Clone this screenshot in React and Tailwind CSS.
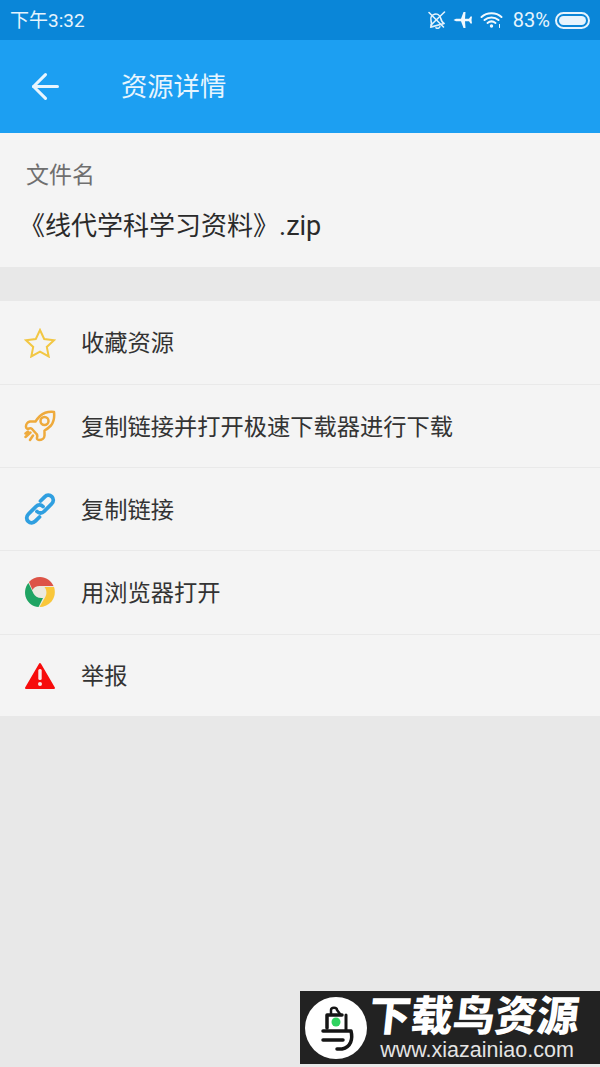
import React from "react";
import { ArrowLeft } from "lucide-react";

const FONT = "font-['Roboto','Noto_Sans_CJK_SC',sans-serif]";

const StarIcon = () => (
  <svg width="32" height="30" viewBox="0 0 32 30" fill="none" stroke="#f2c744" strokeWidth="2" strokeLinejoin="miter">
    <path d="M16 2 L20.200 11 L30 12.200 L22.800 18.900 L24.700 28.500 L16 23.700 L7.300 28.500 L9.200 18.900 L2 12.200 L11.800 11 Z" />
  </svg>
);

const RocketIcon = () => (
  <svg width="32" height="32" viewBox="0 0 32 32" fill="none" stroke="#eeaa3c" strokeWidth="2.500" strokeLinejoin="round" strokeLinecap="round">
    <path d="M30 2 C25 1.500 20 2.500 16 6 C14 8 12.500 10 11.500 11.500 L6 11.500 C3.500 12 1.800 14.500 2 17 C2 18.500 3.500 19 5 18.500 C6.500 18 7.500 18 8 19 L12.500 24 C13.500 25 13.500 26 13 27.500 C12.700 29 13.500 30 15 30 C18 30 20.500 28 20.500 25.500 L20.500 20.500 C22.500 19.500 25 17.500 27 15.500 C30 11.500 30.500 6 30 2 Z" />
    <circle cx="20.500" cy="11" r="4" />
    <path d="M6.500 22.500 L1.500 27 M9 25.500 L6 30 M4 21.500 L1.500 23.500" />
  </svg>
);

const LinkIcon = () => (
  <svg width="32" height="32" viewBox="0 0 32 32" fill="none" stroke="#2f9fe0" strokeWidth="3.800" strokeLinecap="round">
    <path d="M13 18.500 C15 20.500 18 20.500 20 18.500 L27.500 11 C29.800 8.700 29.800 5.700 27.800 3.700 C25.800 1.700 22.700 1.800 20.700 3.800 L16.500 8" />
    <path d="M19 13.500 C17 11.500 14 11.500 12 13.500 L4.500 21 C2.200 23.300 2.200 26.300 4.200 28.300 C6.200 30.300 9.300 30.200 11.300 28.200 L15.500 24" />
  </svg>
);

const ChromeIcon = () => (
  <svg width="32" height="32" viewBox="0 0 32 32">
    <circle cx="16" cy="16" r="15" fill="#ece9df" />
    <path d="M5 6 C8 2.500 12 1 16 1 C22 1 27 4.500 29.500 10 L17 10 C13 9.500 10 11 8.500 14 Z" fill="#dd5347" />
    <path d="M30 11 C31.500 16 31 21 27.500 25.500 C24.500 29 20 31 15.500 31 L21 21.500 C23 18.500 23 14 20.500 11 Z" fill="#f9c73a" />
    <path d="M14.500 31 C9 30.500 4.500 27.500 2.300 22.500 C0 17 1 11 4.500 7 L9.500 17.500 C11 20.500 14 22.500 19 22 Z" fill="#1fa463" />
  </svg>
);

const WarnIcon = () => (
  <svg width="32" height="28" viewBox="0 0 32 28">
    <path d="M16 2 L30 26 L2 26 Z" fill="#f70c0c" stroke="#f70c0c" strokeWidth="2" strokeLinejoin="round" />
    <rect x="14.300" y="7" width="3.400" height="11" rx="1.500" fill="#f8e8e8" />
    <circle cx="16" cy="22" r="2" fill="#f8e8e8" />
  </svg>
);

const BellOffIcon = () => (
  <svg width="20" height="20" viewBox="0 0 20 20" fill="none" stroke="#e3f2fc" strokeWidth="1.600" strokeLinecap="round" strokeLinejoin="round">
    <g transform="rotate(-15 10 10)">
      <path d="M3 15.500 C5 14 5 11.500 5 9.500 C5 6 7.500 4 10 4 C12.500 4 15 6 15 9.500 C15 11.500 15 14 17 15.500 Z" />
      <path d="M8 17.500 C9 18.800 11 18.800 12 17.500" />
    </g>
    <path d="M3 2.500 L17.500 17" />
    <path d="M18.500 2 L5 15" />
  </svg>
);

const PlaneIcon = () => (
  <svg width="20" height="18" viewBox="0 0 20 18" fill="#f2f9fe">
    <path d="M0.500 9 L3 7.800 L8 7.800 L10.500 1 L12.500 1 L12 7.800 L16 7.800 L17.500 5.500 L19 5.500 L18.500 9 L19 12.500 L17.500 12.500 L16 10.200 L12 10.200 L12.500 17 L10.500 17 L8 10.200 L3 10.200 Z" />
  </svg>
);

const WifiIcon = () => (
  <svg width="24" height="18" viewBox="0 0 24 18" fill="none" stroke="#f2f9fe" strokeWidth="2" strokeLinecap="round">
    <path d="M1.500 6 C7 1 16 1 21.500 6" />
    <path d="M4.500 9 C8.500 5.500 14.500 5.500 18.500 9" />
    <path d="M7.500 12 C10 10 13 10 15.500 12" />
    <circle cx="11.500" cy="15" r="1.700" fill="#f2f9fe" stroke="none" />
    <path d="M19.500 13.500 L19.500 16.500" strokeWidth="1" />
  </svg>
);

const BirdLogo = () => (
  <svg width="62" height="62" viewBox="0 0 62 62" fill="none" stroke="#151515" strokeLinecap="round" strokeLinejoin="round">
    <path d="M26 17 L26 13 C26 10 32 10 32 13 L35 17" strokeWidth="2.500" />
    <path d="M37 18 L22 18 L22 31" strokeWidth="3.500" />
    <path d="M41 18 L41 33" strokeWidth="3" />
    <path d="M18 34 L46 34 C48 42 46 50 37 52 L32 52" strokeWidth="3.500" />
    <path d="M18 43 L38 43" strokeWidth="3.500" />
    <circle cx="31" cy="25" r="4.500" fill="#2fd35f" stroke="none" />
  </svg>
);

const rows = [
  { label: "收藏资源", icon: <StarIcon /> },
  { label: "复制链接并打开极速下载器进行下载", icon: <RocketIcon /> },
  { label: "复制链接", icon: <LinkIcon /> },
  { label: "用浏览器打开", icon: <ChromeIcon /> },
  { label: "举报", icon: <WarnIcon /> },
];

const App = () => {
  return (
    <div className={`relative w-[600px] h-[1067px] overflow-hidden bg-[#e8e8e8] ${FONT}`}>
      <div className="h-10 bg-[#0a86d8] flex items-center justify-between px-[10px] text-[#e6f4fd]">
        <span className="text-[19px] leading-none">下午3:32</span>
        <div className="flex items-center">
          <BellOffIcon />
          <div className="ml-[7px]"><PlaneIcon /></div>
          <div className="ml-[7px]"><WifiIcon /></div>
          <span className="ml-[9px] text-[20px] leading-none">83%</span>
          <div className="ml-[5px] w-[35px] h-[17px] rounded-full border-2 border-[#e6f4fd] p-[2px] flex">
            <div className="flex-1 rounded-full bg-[#e6f4fd]" />
          </div>
        </div>
      </div>

      <div className="h-[93px] bg-[#1c9ff2] flex items-center text-[#e8f5fe]">
        <ArrowLeft size={41} strokeWidth={1.800} className="ml-[25px]" />
        <span className="ml-[55px] pt-[2px] text-[26.300px] leading-none">资源详情</span>
      </div>

      <div className="h-[134px] bg-[#f4f4f4] pl-[26px] pt-[29px]">
        <div className="text-[23px] leading-[28px] text-[#6f6f6f]">文件名</div>
        <div className="mt-[20px] -ml-[7px] text-[26px] leading-[32px] text-[#2a2a2a]">
          《线代学科学习资料》<span className="text-[27px]">.zip</span>
        </div>
      </div>

      <div className="mt-[34px] h-[415px] bg-[#f4f4f4]">
        {rows.map((row, i) => (
          <div
            key={row.label}
            className={`h-[83.150px] flex items-center ${i > 0 ? "border-t border-[#e9e9e9]" : ""}`}
          >
            <div className="w-[81px] flex justify-center pr-[2px]">{row.icon}</div>
            <span className="pt-[2px] text-[23.250px] leading-none text-[#333333]">{row.label}</span>
          </div>
        ))}
      </div>

      <div className="absolute right-0 bottom-[3px] w-[300px] h-[73px] bg-[#222222] flex items-center">
        <div className="ml-[5px] w-[62px] h-[62px] rounded-full bg-white shrink-0">
          <BirdLogo />
        </div>
        <div className="ml-[2px] flex flex-col items-center">
          <span className="text-[42px] leading-[42px] font-black -skew-x-6 text-white whitespace-nowrap">下载鸟资源</span>
          <span className="pl-[6px] mt-[2px] font-['Liberation_Sans',sans-serif] text-[21.500px] leading-[20px] text-[#e4e4e4]">www.xiazainiao.com</span>
        </div>
      </div>
    </div>
  );
};

export default App;
